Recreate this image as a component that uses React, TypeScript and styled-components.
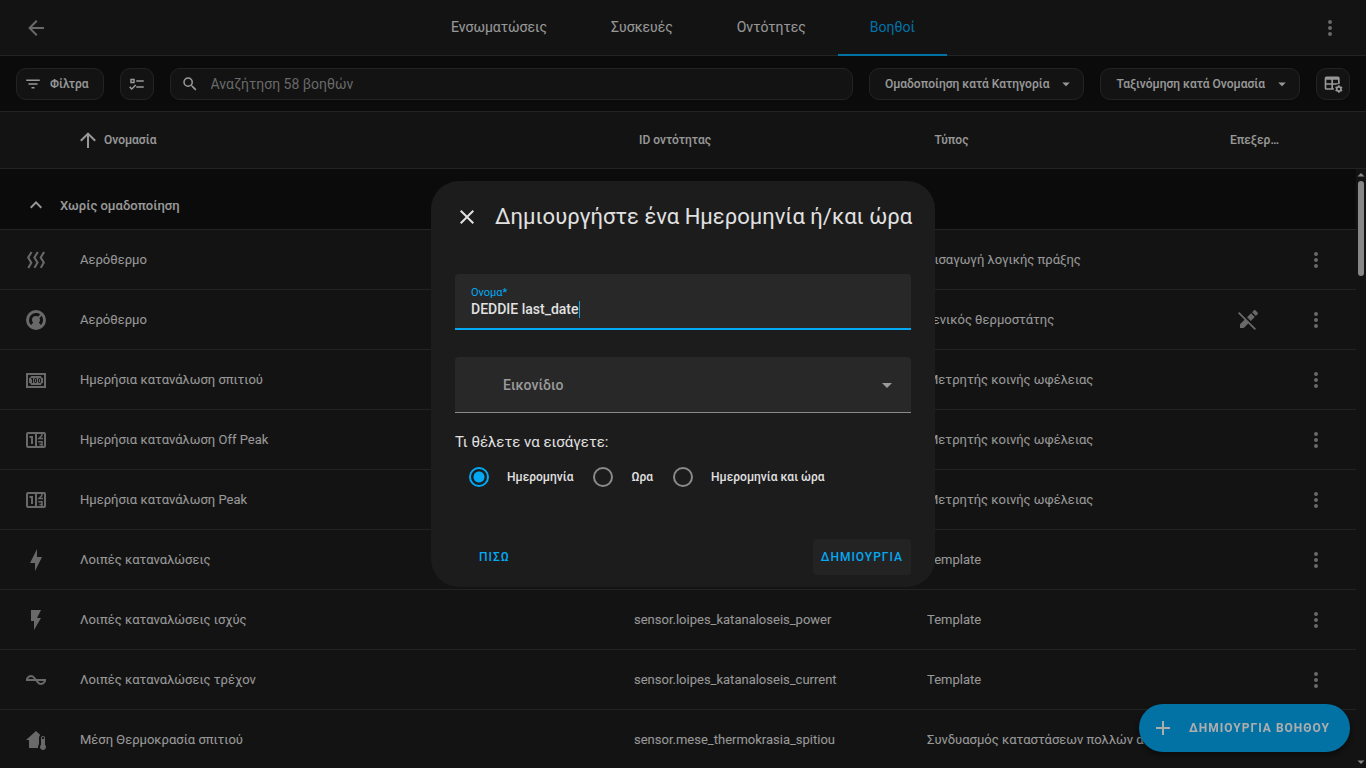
import React from "react";
import styled, { createGlobalStyle, css } from "styled-components";

const GlobalStyle = createGlobalStyle`
  * { box-sizing: border-box; }
  html, body, #root { height: 100%; }
  body {
    margin: 0;
    overflow: hidden;
    background: #111111;
    color: #e1e1e1;
    font-family: Roboto, "Noto Sans", sans-serif;
    font-size: 14px;
  }
  button, input { font: inherit; color: inherit; }
  button { border: 0; background: none; padding: 0; cursor: pointer; }
`;

const PATHS = {
  back: "M20,11V13H8L13.5,18.5L12.08,19.92L4.16,12L12.08,4.08L13.5,5.5L8,11H20Z",
  dots: "M12,16A2,2 0 0,1 14,18A2,2 0 0,1 12,20A2,2 0 0,1 10,18A2,2 0 0,1 12,16M12,10A2,2 0 0,1 14,12A2,2 0 0,1 12,14A2,2 0 0,1 10,12A2,2 0 0,1 12,10M12,4A2,2 0 0,1 14,6A2,2 0 0,1 12,8A2,2 0 0,1 10,6A2,2 0 0,1 12,4Z",
  filter: "M6,13H18V11H6M3,6V8H21V6M10,18H14V16H10V18Z",
  checks: "M3,5H9V11H3V5M5,7V9H7V7H5M11,7H21V9H11V7M11,15H21V17H11V15M5,20L1.5,16.5L2.91,15.09L5,17.17L9.59,12.59L11,14L5,20Z",
  search: "M9.5,3A6.5,6.5 0 0,1 16,9.5C16,11.11 15.41,12.59 14.44,13.73L14.71,14H15.5L20.5,19L19,20.5L14,15.5V14.71L13.73,14.44C12.59,15.41 11.11,16 9.5,16A6.5,6.5 0 0,1 3,9.5A6.5,6.5 0 0,1 9.5,3M9.5,5C7,5 5,7 5,9.5C5,12 7,14 9.5,14C12,14 14,12 14,9.5C14,7 12,5 9.5,5Z",
  down: "M7,10L12,15L17,10H7Z",
  scrollUp: "M5,15L12,8L19,15H5Z",
  scrollDown: "M5,9L12,16L19,9H5Z",
  arrowUp: "M13,20H11V8L5.5,13.5L4.08,12.08L12,4.16L19.92,12.08L18.5,13.5L13,8V20Z",
  chevronUp: "M7.41,15.41L12,10.83L16.59,15.41L18,14L12,8L6,14L7.41,15.41Z",
  close: "M19,6.41L17.59,5L12,10.59L6.41,5L5,6.41L10.59,12L5,17.59L6.41,19L12,13.41L17.59,19L19,17.59L13.41,12L19,6.41Z",
  plus: "M19,13H13V19H11V13H5V11H11V5H13V11H19V13Z",
  flash: "M7,2V13H10V22L17,10H13L17,2H7Z",
  bolt: "M11 15H6L13 1V9H18L11 23V15Z",
  ac: "M12.43 11C12.28 10.84 10 7 7 7S2.32 10.18 2 11V13H11.57C11.72 13.16 14 17 17 17S21.68 13.82 22 13V11H12.43M7 9C8.17 9 9.18 9.85 10 11H4.31C4.78 10.17 5.54 9 7 9M17 15C15.83 15 14.82 14.16 14 13H19.69C19.22 13.83 18.46 15 17 15Z",
  pencilOff: "M18.66,2C18.4,2 18.16,2.09 17.97,2.28L16.13,4.13L19.88,7.88L21.72,6.03C22.11,5.64 22.11,5 21.72,4.63L19.38,2.28C19.18,2.09 18.91,2 18.66,2M3.28,4L2,5.28L8.5,11.75L4,16.25V20H7.75L12.25,15.5L18.72,22L20,20.72L13.5,14.25L9.75,10.5L3.28,4M15.06,5.19L11.03,9.22L14.78,12.97L18.81,8.94L15.06,5.19Z",
  heat: "M8.5 4.5L5.4 9.5L8.5 14.7L5.2 20.5L3.4 19.6L6.1 14.7L3 9.5L6.7 3.6L8.5 4.5M14.7 4.4L11.6 9.5L14.7 14.5L11.4 20.3L9.6 19.4L12.3 14.5L9.2 9.5L12.9 3.5L14.7 4.4M21 4.4L17.9 9.5L21 14.5L17.7 20.3L15.9 19.4L18.6 14.5L15.5 9.5L19.2 3.5L21 4.4Z",
  thermostat: "M16.95,16.95L14.83,14.83C15.55,14.1 16,13.1 16,12C16,11.26 15.79,10.57 15.43,10L17.6,7.81C18.5,9 19,10.43 19,12C19,13.93 18.22,15.68 16.95,16.95M12,5C13.57,5 15,5.5 16.19,6.4L14,8.56C13.43,8.21 12.74,8 12,8A4,4 0 0,0 8,12C8,13.1 8.45,14.1 9.17,14.83L7.05,16.95C5.78,15.68 5,13.93 5,12A7,7 0 0,1 12,5M12,2A10,10 0 0,0 2,12A10,10 0 0,0 12,22A10,10 0 0,0 22,12A10,10 0 0,0 12,2Z",
  home: "M19 8C20.11 8 21 8.9 21 10V16.76C21.61 17.31 22 18.11 22 19C22 20.66 20.66 22 19 22C17.34 22 16 20.66 16 19C16 18.11 16.39 17.31 17 16.76V10C17 8.9 17.9 8 19 8M19 9C18.45 9 18 9.45 18 10V11H20V10C20 9.45 19.55 9 19 9M12 3L16.4 6.96C15.54 7.69 15 8.78 15 10V16C14.37 16.83 14 17.87 14 19L14.1 20H5V12H2L12 3Z",
};

const Svg = styled.svg`
  display: block;
  flex: none;
  fill: currentColor;
`;

type IconProps = { name: keyof typeof PATHS; size?: number };
const Icon = ({ name, size = 24 }: IconProps) => (
  <Svg width={size} height={size} viewBox="0 0 24 24" aria-hidden="true">
    <path fillRule="evenodd" d={PATHS[name]} />
  </Svg>
);

const CashIcon = () => (
  <Svg width={24} height={24} viewBox="0 0 24 24" aria-hidden="true">
    <path
      fillRule="evenodd"
      d="M2,5H22V20H2V5M4,7V18H20V7H4M7,8H17A2,2 0 0,0 19,10V15A2,2 0 0,0 17,17H7A2,2 0 0,0 5,15V10A2,2 0 0,0 7,8M8,10L7,10.5V11.5L8,11V15H9V10H8M11.5,10A1.5,2 0 0,0 10,12V13A1.5,2 0 0,0 13,13V12A1.5,2 0 0,0 11.5,10M15.5,10A1.5,2 0 0,0 14,12V13A1.5,2 0 0,0 17,13V12A1.5,2 0 0,0 15.5,10"
    />
    <rect x="11" y="11" width="1" height="3" />
    <rect x="15" y="11" width="1" height="3" />
  </Svg>
);

const CounterIcon = () => (
  <Svg width={24} height={24} viewBox="0 0 24 24" aria-hidden="true">
    <path fillRule="evenodd" d="M4,4H20A2,2 0 0,1 22,6V18A2,2 0 0,1 20,20H4A2,2 0 0,1 2,18V6A2,2 0 0,1 4,4M4,6V18H11V6H4M13,6V18H20V6H13Z" />
    <g fill="none" stroke="currentColor">
      <path strokeWidth="2" d="M5.5,9H8V16" />
      <path strokeWidth="1.5" d="M17.8,6V7.6L15,10.4H19M14.2,13.8H18V18M15.4,16.4H18" />
    </g>
  </Svg>
);

const TableCogIcon = () => (
  <Svg width={20} height={20} viewBox="0 0 24 24" aria-hidden="true">
    <path
      fillRule="evenodd"
      d="M4,3H18A2,2 0 0,1 20,5V12.08C18.45,11.82 16.92,12.18 15.68,13H12V17H13.08C12.97,17.68 12.97,18.35 13.08,19H4A2,2 0 0,1 2,17V5A2,2 0 0,1 4,3M4,7V11H10V7H4M12,7V11H18V7H12M4,13V17H10V13H4Z"
    />
    <g fill="none" stroke="currentColor" strokeWidth="2">
      <circle cx="19" cy="18" r="2.6" />
      <path d="M19,13.5V15M19,21V22.5M15.1,15.75L16.4,16.5M21.6,19.5L22.9,20.25M22.9,15.75L21.6,16.5M16.4,19.5L15.1,20.25" />
    </g>
  </Svg>
);

const Page = styled.div`
  display: flex;
  flex-direction: column;
  height: 100%;
`;

const TopBar = styled.header`
  display: grid;
  grid-template-columns: 48px 1fr 48px;
  height: 56px;
  padding: 0 12px;
  background: #1c1c1c;
  border-bottom: 1px solid #343434;
`;

const IconButton = styled.button`
  display: flex;
  align-items: center;
  justify-content: center;
  width: 48px;
  height: 100%;
  color: #9b9b9b;
`;

const Tabs = styled.nav`
  display: flex;
  justify-content: center;
`;

const Tab = styled.a<{ $active?: boolean }>`
  height: 56px;
  padding: 0 32px;
  color: #e1e1e1;
  line-height: 54px;
  text-decoration: none;
  ${(p) =>
    p.$active &&
    css`
      color: #03a9f4;
      border-bottom: 2px solid #03a9f4;
    `}
`;

const Toolbar = styled.div`
  display: flex;
  align-items: center;
  gap: 16px;
  height: 56px;
  padding: 0 16px;
  border-bottom: 1px solid #343434;
`;

const outlined = css`
  display: flex;
  align-items: center;
  height: 32px;
  background: #1c1c1c;
  border: 1px solid #343434;
  border-radius: 10px;
`;

const Chip = styled.button<{ $pad: string }>`
  ${outlined}
  flex: none;
  gap: 8px;
  padding: ${(p) => p.$pad};
  font-size: 12px;
  font-weight: 500;
`;

const SearchBox = styled.label`
  ${outlined}
  flex: 1;
  gap: 12px;
  padding: 0 10px;
`;

const SearchInput = styled.input`
  flex: 1;
  min-width: 0;
  padding: 0;
  border: 0;
  outline: 0;
  background: none;
  &::placeholder { color: #9b9b9b; opacity: 1; }
`;

const TableArea = styled.div`
  position: relative;
  display: flex;
  flex: 1;
  min-height: 0;
`;

const Table = styled.table`
  display: flex;
  flex: 1;
  flex-direction: column;
  min-height: 0;
  background: #1c1c1c;
  font-size: 13px;
`;

const Head = styled.thead`
  display: block;
`;

const Body = styled.tbody`
  display: block;
  height: 100%;
  padding-right: 10px;
  overflow: hidden;
`;

const Row = styled.tr<{ $head?: boolean }>`
  display: flex;
  align-items: center;
  height: ${(p) => (p.$head ? 57 : 60)}px;
  border-bottom: 1px solid #343434;
`;

const GroupRow = styled(Row)`
  height: 61px;
  padding: 12px 24px 0;
  background: #111111;
`;

const cell = css<{ $grow?: number; $width?: number }>`
  display: block;
  padding: 0 16px;
  overflow: hidden;
  text-align: left;
  text-overflow: ellipsis;
  white-space: nowrap;
  line-height: 20px;
  flex: ${(p) => (p.$grow ? `${p.$grow} 1 0` : `0 0 ${p.$width}px`)};
`;

const Th = styled.th`
  ${cell}
  font-size: 12px;
  font-weight: 500;
`;

const Td = styled.td`
  ${cell}
`;

const IconTd = styled.td<{ $width: number; $pad?: string }>`
  display: flex;
  justify-content: center;
  flex: 0 0 ${(p) => p.$width}px;
  padding: ${(p) => p.$pad ?? "0"};
  color: #9b9b9b;
`;

const SortLabel = styled.span`
  display: flex;
  align-items: center;
  gap: 4px;
  margin-left: -4px;
`;

const GroupTd = styled.td`
  display: flex;
  align-items: center;
  gap: 12px;
  padding: 0;
  font-weight: 500;
`;

const ScrollTrack = styled.div`
  position: absolute;
  top: 57px;
  right: 0;
  bottom: 0;
  display: flex;
  flex-direction: column;
  align-items: center;
  width: 10px;
  background: #1c1c1c;
  color: #c8c8c8;
`;

const ScrollThumb = styled.div`
  width: 6px;
  height: 95px;
  margin-bottom: auto;
  border-radius: 3px;
  background: #c8c8c8;
`;

const Fab = styled.button`
  position: fixed;
  right: 16px;
  bottom: 16px;
  display: flex;
  align-items: center;
  gap: 14px;
  height: 48px;
  padding: 0 20px 0 12px;
  border-radius: 24px;
  background: #03a9f4;
  color: #ffffff;
  font-size: 12px;
  font-weight: 700;
  letter-spacing: 1px;
  box-shadow: 0 3px 5px rgba(0, 0, 0, 0.4);
`;

const Scrim = styled.div`
  position: fixed;
  inset: 0;
  display: flex;
  align-items: center;
  justify-content: center;
  background: rgba(0, 0, 0, 0.32);
`;

const Dialog = styled.form`
  display: flex;
  flex-direction: column;
  width: 504px;
  padding: 24px 24px 12px;
  border-radius: 28px;
  background: #1c1c1c;
`;

const DialogHeader = styled.div`
  display: flex;
  align-items: center;
  gap: 16px;
  height: 24px;
  margin-bottom: 45px;
`;

const CloseButton = styled.button`
  height: 24px;
`;

const DialogTitle = styled.h2`
  margin: 0;
  font-size: 22px;
  font-weight: 400;
  line-height: 28px;
  white-space: nowrap;
`;

const Field = styled.label`
  display: flex;
  flex-direction: column;
  height: 56px;
  margin-bottom: 27px;
  padding: 12px 16px 0;
  border-bottom: 2px solid #03a9f4;
  border-radius: 4px 4px 0 0;
  background: #282828;
`;

const FieldLabel = styled.span`
  color: #03a9f4;
  font-size: 11px;
  line-height: 13px;
`;

const FieldValue = styled.span`
  display: flex;
  align-items: center;
`;

const FieldInput = styled.input`
  field-sizing: content;
  max-width: 100%;
  height: 20px;
  padding: 0;
  border: 0;
  outline: 0;
  background: none;
  font-weight: 500;
  caret-color: transparent;
`;

const Caret = styled.span`
  flex: none;
  width: 1px;
  height: 17px;
  background: #03a9f4;
`;

const Picker = styled.button`
  display: flex;
  align-items: center;
  justify-content: space-between;
  height: 56px;
  padding: 0 12px 0 48px;
  border-bottom: 1px solid #8a8a8a;
  border-radius: 4px 4px 0 0;
  background: #282828;
  color: #9b9b9b;
  font-weight: 500;
`;

const Choices = styled.fieldset`
  display: flex;
  min-width: 0;
  margin: 19px 0 0;
  padding: 0 4px;
  border: 0;
`;

const Legend = styled.legend`
  margin: 0 -4px 5px;
  padding: 0;
  font-size: 15px;
  line-height: 20px;
`;

const Choice = styled.label`
  display: flex;
  align-items: center;
  gap: 18px;
  height: 40px;
  padding: 0 10px;
  font-size: 12px;
  font-weight: 500;
`;

const Radio = styled.input`
  appearance: none;
  width: 20px;
  height: 20px;
  margin: 0;
  border: 2px solid #8a8a8a;
  border-radius: 50%;
  &:checked {
    border-color: #03a9f4;
    background: radial-gradient(circle, #03a9f4 5px, transparent 6px);
  }
`;

const Actions = styled.div`
  display: flex;
  justify-content: space-between;
  margin-top: 42px;
  padding-left: 16px;
`;

const TextButton = styled.button<{ $filled?: boolean }>`
  height: 36px;
  padding: 0 8px;
  border-radius: 4px;
  background: ${(p) => (p.$filled ? "#232323" : "transparent")};
  color: #03a9f4;
  font-size: 12px;
  font-weight: 500;
  letter-spacing: 1px;
`;

const ROWS: { icon: React.ReactNode; name: string; id: string; type: string; locked?: boolean }[] = [
  { icon: <Icon name="heat" />, name: "Αερόθερμο", id: "input_boolean.aerothermo", type: "Εισαγωγή λογικής πράξης" },
  { icon: <Icon name="thermostat" />, name: "Αερόθερμο", id: "climate.aerothermo", type: "Γενικός θερμοστάτης", locked: true },
  { icon: <CashIcon />, name: "Ημερήσια κατανάλωση σπιτιού", id: "sensor.daily_energy", type: "Μετρητής κοινής ωφέλειας" },
  { icon: <CounterIcon />, name: "Ημερήσια κατανάλωση Off Peak", id: "sensor.daily_off_peak", type: "Μετρητής κοινής ωφέλειας" },
  { icon: <CounterIcon />, name: "Ημερήσια κατανάλωση Peak", id: "sensor.daily_peak", type: "Μετρητής κοινής ωφέλειας" },
  { icon: <Icon name="bolt" />, name: "Λοιπές καταναλώσεις", id: "sensor.loipes_katanaloseis", type: "Template" },
  { icon: <Icon name="flash" />, name: "Λοιπές καταναλώσεις ισχύς", id: "sensor.loipes_katanaloseis_power", type: "Template" },
  { icon: <Icon name="ac" />, name: "Λοιπές καταναλώσεις τρέχον", id: "sensor.loipes_katanaloseis_current", type: "Template" },
  { icon: <Icon name="home" />, name: "Μέση Θερμοκρασία σπιτιού", id: "sensor.mese_thermokrasia_spitiou", type: "Συνδυασμός καταστάσεων πολλών αισθ." },
];

export default function App() {
  return (
    <Page>
      <GlobalStyle />
      <TopBar>
        <IconButton aria-label="Πίσω"><Icon name="back" /></IconButton>
        <Tabs>
          <Tab href="#integrations">Ενσωματώσεις</Tab>
          <Tab href="#devices">Συσκευές</Tab>
          <Tab href="#entities">Οντότητες</Tab>
          <Tab href="#helpers" $active>Βοηθοί</Tab>
        </Tabs>
        <IconButton aria-label="Μενού"><Icon name="dots" /></IconButton>
      </TopBar>
      <Toolbar>
        <Chip $pad="0 14px 0 7px"><Icon name="filter" size={18} />Φίλτρα</Chip>
        <Chip $pad="0 7px" aria-label="Επιλογή"><Icon name="checks" size={18} /></Chip>
        <SearchBox>
          <Icon name="search" size={18} />
          <SearchInput placeholder="Αναζήτηση 58 βοηθών" />
        </SearchBox>
        <Chip $pad="0 8px 0 15px">Ομαδοποίηση κατά Κατηγορία<Icon name="down" size={18} /></Chip>
        <Chip $pad="0 8px 0 15px">Ταξινόμηση κατά Ονομασία<Icon name="down" size={18} /></Chip>
        <Chip $pad="0 6px" aria-label="Ρυθμίσεις"><TableCogIcon /></Chip>
      </Toolbar>
      <TableArea>
        <Table>
          <Head>
            <Row $head>
              <Th $width={64} aria-label="Εικονίδιο" />
              <Th $grow={2}><SortLabel><Icon name="arrowUp" />Ονομασία</SortLabel></Th>
              <Th $grow={1}>ID οντότητας</Th>
              <Th $grow={1}>Τύπος</Th>
              <Th $width={88} aria-label="Επεξεργάσιμο">Επεξερ…</Th>
              <Th $width={64} aria-label="Ενέργειες" />
            </Row>
          </Head>
          <Body>
            <GroupRow><GroupTd><Icon name="chevronUp" />Χωρίς ομαδοποίηση</GroupTd></GroupRow>
            {ROWS.map((row) => (
              <Row key={row.id}>
                <IconTd $width={64} $pad="0 0 0 8px">{row.icon}</IconTd>
                <Td $grow={2}>{row.name}</Td>
                <Td $grow={1}>{row.id}</Td>
                <Td $grow={1}>{row.type}</Td>
                <IconTd $width={88}>{row.locked && <Icon name="pencilOff" />}</IconTd>
                <IconTd $width={64} $pad="0 16px 0 0">
                  <IconButton aria-label="Ενέργειες"><Icon name="dots" /></IconButton>
                </IconTd>
              </Row>
            ))}
          </Body>
        </Table>
        <ScrollTrack>
          <Icon name="scrollUp" size={12} />
          <ScrollThumb />
          <Icon name="scrollDown" size={12} />
        </ScrollTrack>
      </TableArea>
      <Fab><Icon name="plus" />ΔΗΜΙΟΥΡΓΙΑ ΒΟΗΘΟΥ</Fab>
      <Scrim>
        <Dialog role="dialog" aria-labelledby="dialog-title" onSubmit={(e) => e.preventDefault()}>
          <DialogHeader>
            <CloseButton type="button" aria-label="Κλείσιμο"><Icon name="close" /></CloseButton>
            <DialogTitle id="dialog-title">Δημιουργήστε ένα Ημερομηνία ή/και ώρα</DialogTitle>
          </DialogHeader>
          <Field>
            <FieldLabel>Ονομα*</FieldLabel>
            <FieldValue>
              <FieldInput defaultValue="DEDDIE last_date" />
              <Caret />
            </FieldValue>
          </Field>
          <Picker type="button">Εικονίδιο<Icon name="down" /></Picker>
          <Choices>
            <Legend>Τι θέλετε να εισάγετε:</Legend>
            <Choice><Radio type="radio" name="mode" defaultChecked />Ημερομηνία</Choice>
            <Choice><Radio type="radio" name="mode" />Ωρα</Choice>
            <Choice><Radio type="radio" name="mode" />Ημερομηνία και ώρα</Choice>
          </Choices>
          <Actions>
            <TextButton type="button">ΠΙΣΩ</TextButton>
            <TextButton type="submit" $filled>ΔΗΜΙΟΥΡΓΙΑ</TextButton>
          </Actions>
        </Dialog>
      </Scrim>
    </Page>
  );
}
